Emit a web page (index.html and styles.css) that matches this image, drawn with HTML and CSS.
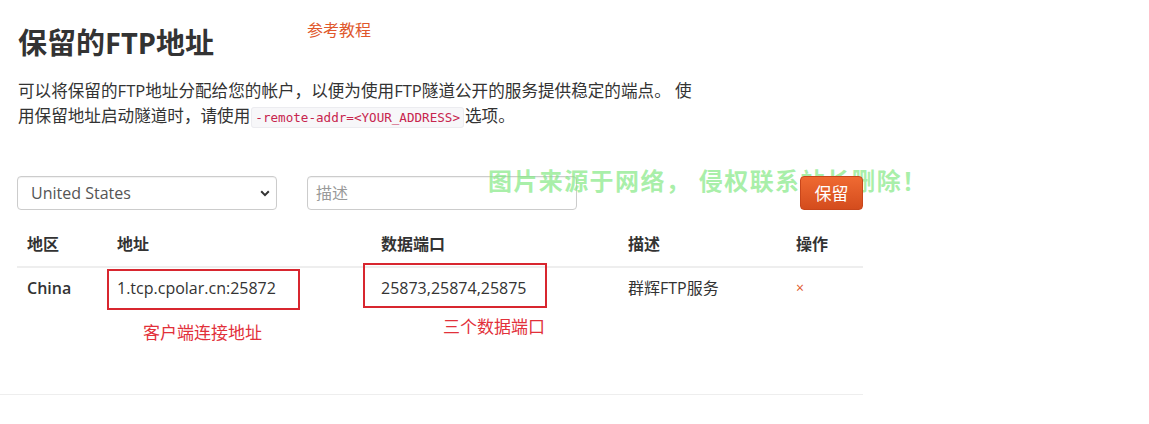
FILE: index.html
```html
<!DOCTYPE html>
<html lang="zh-CN">
<head>
    <meta charset="UTF-8">
    <title>保留的FTP地址</title>
    <link rel="stylesheet" href="styles.css">
</head>
<body>
<div class="page">
    <div class="page-head">
        <h1>保留的FTP地址</h1>
        <a class="tutorial" href="#">参考教程</a>
    </div>

    <p class="intro">可以将保留的FTP地址分配给您的帐户，以便为使用FTP隧道公开的服务提供稳定的端点。 使<br>用保留地址启动隧道时，请使用<code>-remote-addr=&lt;YOUR_ADDRESS&gt;</code>选项。</p>

    <div class="watermark">图片来源于网络， 侵权联系站长删除！</div>

    <form class="reserve-form">
        <div class="select-wrap">
            <select class="form-control">
                <option>United States</option>
                <option>China</option>
            </select>
            <svg class="chevron" width="10" height="7" viewBox="0 0 10 7">
                <path d="M1.2 1.3 L5 5.1 L8.8 1.3" fill="none" stroke="#333" stroke-width="2"/>
            </svg>
        </div>
        <input class="form-control desc" type="text" placeholder="描述">
        <button class="btn-reserve" type="button">保留</button>
    </form>

    <div class="table-wrap">
        <table class="addr-table">
            <thead>
            <tr>
                <th class="col-region">地区</th>
                <th class="col-addr">地址</th>
                <th class="col-ports">数据端口</th>
                <th class="col-desc">描述</th>
                <th class="col-op">操作</th>
            </tr>
            </thead>
            <tbody>
            <tr>
                <td class="region">China</td>
                <td>1.tcp.cpolar.cn:25872</td>
                <td>25873,25874,25875</td>
                <td>群辉FTP服务</td>
                <td><a class="remove" href="#">×</a></td>
            </tr>
            </tbody>
        </table>

        <!-- 标注 -->
        <span class="mark mark-addr"></span>
        <span class="mark mark-ports"></span>
        <span class="note note-addr">客户端连接地址</span>
        <span class="note note-ports">三个数据端口</span>
    </div>
</div>
</body>
</html>
```

FILE: styles.css
```css
* {
    margin: 0;
    padding: 0;
    box-sizing: border-box;
}

body {
    font-family: 'Open Sans', 'Noto Sans CJK SC', sans-serif;
    font-size: 16px;
    color: #333;
    background: #fff;
}

.page {
    position: relative;
    width: 863px;
    padding: 0 0 84px 17px;
    border-bottom: 1px solid #eee;
}

.page-head {
    display: flex;
    align-items: flex-start;
    padding-top: 23px;
}

.page-head h1 {
    font-size: 29px;
    line-height: 40px;
    font-weight: 700;
    color: #333;
    padding-left: 1px;
}

.tutorial {
    margin-left: 93px;
    margin-top: -5px;
    font-size: 16px;
    line-height: 24px;
    color: #e0582c;
    text-decoration: none;
}

.intro {
    margin-top: 16px;
    padding-left: 1px;
    font-size: 16.6px;
    line-height: 24.5px;
    color: #333;
}

.intro code {
    font-family: 'DejaVu Sans Mono', 'Liberation Mono', monospace;
    font-size: 12.6px;
    color: #c7254e;
    background: #f7f7f9;
    border: 1px solid #ececf0;
    border-radius: 3px;
    padding: 2px 3px;
    margin: 0 1px;
}

.reserve-form {
    display: flex;
    align-items: center;
    margin-top: 46px;
    width: 846px;
}

.select-wrap {
    position: relative;
    width: 260px;
}

.form-control {
    height: 34px;
    border: 1px solid #ccc;
    border-radius: 4px;
    font-family: inherit;
    font-size: 16px;
    color: #555;
    background: #fff;
    padding: 0 13px;
    box-shadow: inset 0 1px 1px rgba(0,0,0,0.06);
}

select.form-control {
    width: 100%;
    appearance: none;
    -webkit-appearance: none;
}

.chevron {
    position: absolute;
    right: 7px;
    top: 14px;
    pointer-events: none;
}

.desc {
    width: 270px;
    margin-left: 30px;
    padding: 0 8px;
}

.desc::placeholder {
    color: #999;
}

.btn-reserve {
    position: relative;
    z-index: 1;
    margin-left: auto;
    margin-top: -1px;
    width: 63px;
    height: 34px;
    border: 1px solid #c8461b;
    border-radius: 4px;
    background: linear-gradient(#ef6a32, #d44c1d);
    color: #fff;
    font-family: inherit;
    font-size: 17px;
}

.table-wrap {
    position: relative;
    margin-top: 22px;
    width: 846px;
}

.addr-table {
    width: 846px;
    border-collapse: collapse;
}

.addr-table th,
.addr-table td {
    text-align: left;
    padding: 0 10px;
    line-height: 24px;
    font-size: 16px;
}

.addr-table th {
    font-weight: 700;
    padding-bottom: 10px;
    border-bottom: 2px solid #eee;
}

.addr-table td {
    padding-top: 7px;
    padding-bottom: 10px;
}

.col-region { width: 90px; }
.col-addr { width: 264px; }
.col-ports { width: 247px; }
.col-desc { width: 168px; }

.addr-table td.region {
    font-weight: 600;
}

.remove {
    color: #e0582c;
    text-decoration: none;
    font-size: 14px;
}

.mark {
    position: absolute;
    border: 2px solid #d8262f;
}

.mark-addr {
    left: 90px;
    top: 37px;
    width: 193px;
    height: 41px;
}

.mark-ports {
    left: 346px;
    top: 31px;
    width: 184px;
    height: 45px;
}

.note {
    position: absolute;
    font-size: 17px;
    line-height: 24px;
    color: #e2303a;
    white-space: nowrap;
}

.note-addr {
    left: 126px;
    top: 89px;
}

.note-ports {
    left: 426px;
    top: 83px;
}

.watermark {
    position: absolute;
    left: 488px;
    top: 166px;
    font-size: 24px;
    line-height: 30px;
    letter-spacing: 1.4px;
    font-weight: 700;
    color: rgba(130, 232, 130, 0.7);
    white-space: nowrap;
    pointer-events: none;
}
```
